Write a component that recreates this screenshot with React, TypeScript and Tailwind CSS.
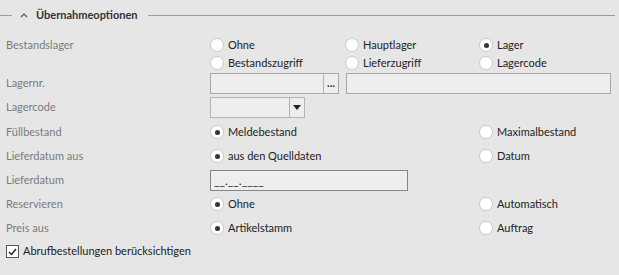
import React from 'react'

const font = {fontFamily: 'Lato, "Open Sans", sans-serif'}

function Radio({label, checked = false}: {label: string; checked?: boolean}) {
  return (
    <div className="flex items-center gap-[4px] whitespace-nowrap">
      <span className="flex h-[14px] w-[14px] items-center justify-center rounded-full border border-[#cacaca] bg-white">
        {checked && <span className="h-[5px] w-[5px] rounded-full bg-[#333]" />}
      </span>
      <span className="text-[11px] text-[#222]">{label}</span>
    </div>
  )
}

function Label({children}: {children: React.ReactNode}) {
  return <div className="w-[210px] shrink-0 pl-[6px] text-[11px] text-[#7b7b7b]">{children}</div>
}

// Zeile mit Label + Optionen in festen Spalten (210 / 479)
function OptRow({label, a, c, aChecked}: {label: string; a: string; c: string; aChecked?: boolean}) {
  return (
    <div className="flex h-[24px] items-center">
      <Label>{label}</Label>
      <div className="w-[269px]">
        <Radio label={a} checked={aChecked} />
      </div>
      <Radio label={c} />
    </div>
  )
}

export default function App() {
  return (
    <div className="h-[275px] w-[619px] overflow-hidden bg-[#e6e6e6]" style={font}>
      {/* Abschnittskopf */}
      <div className="flex h-[30px] items-center">
        <div className="h-px w-[12px] bg-[#9a9a9a]" />
        <svg width="24" height="10" viewBox="0 0 24 10" className="shrink-0">
          <polyline points="9,7 12,4 15,7" fill="none" stroke="#555" strokeWidth="1.2" />
        </svg>
        <span className="text-[11px] font-bold text-[#333]">Übernahmeoptionen</span>
        <div className="ml-[10px] mr-[4px] h-px flex-1 bg-[#9a9a9a]" />
      </div>

      <div className="mt-[6px] flex">
        <Label>
          <div className="flex h-[18px] items-center">Bestandslager</div>
        </Label>
        <div className="grid grid-cols-[135px_134px_130px] grid-rows-[18px_18px] items-center">
          <Radio label="Ohne" />
          <Radio label="Hauptlager" />
          <Radio label="Lager" checked />
          <Radio label="Bestandszugriff" />
          <Radio label="Lieferzugriff" />
          <Radio label="Lagercode" />
        </div>
      </div>

      <div className="mt-[1px] flex h-[21px] items-center">
        <Label>Lagernr.</Label>
        <div className="flex h-[21px] w-[129px] border border-[#a8a8a8] bg-[#eeeeee]">
          <div className="flex-1" />
          <div className="flex w-[15px] items-center justify-center border-l border-[#b4b4b4] pb-[2px] text-[11px] font-bold leading-none text-[#333]">
            ...
          </div>
        </div>
        <div className="ml-[7px] h-[21px] w-[265px] border border-[#a8a8a8] bg-[#eeeeee]" />
      </div>

      <div className="mt-[3px] flex h-[21px] items-center">
        <Label>Lagercode</Label>
        <div className="flex h-[21px] w-[95px] border border-[#b4b4b4] bg-[#eeeeee]">
          <div className="flex-1" />
          <div className="flex w-[15px] items-center justify-center border-l border-[#b4b4b4]">
            <svg width="8" height="5" viewBox="0 0 8 5">
              <polygon points="0,0 8,0 4,5" fill="#222" />
            </svg>
          </div>
        </div>
      </div>

      <div className="mt-[2px]">
        <OptRow label="Füllbestand" a="Meldebestand" c="Maximalbestand" aChecked />
        <OptRow label="Lieferdatum aus" a="aus den Quelldaten" c="Datum" aChecked />

        <div className="flex h-[24px] items-center">
          <Label>Lieferdatum</Label>
          <div className="flex h-[21px] w-[198px] items-end border border-[#858585] bg-[#eeeeee] pb-[1px] pl-[3px] text-[12px] leading-[16px] text-[#222]">
            __.__.____
          </div>
        </div>

        <OptRow label="Reservieren" a="Ohne" c="Automatisch" aChecked />
        <OptRow label="Preis aus" a="Artikelstamm" c="Auftrag" aChecked />

        <div className="flex h-[23px] items-center pl-[6px]">
          <span className="flex h-[13px] w-[13px] items-center justify-center border border-[#555] bg-white">
            <svg width="9" height="8" viewBox="0 0 9 8">
              <polyline points="1,4 3.5,6.5 8,1" fill="none" stroke="#222" strokeWidth="1.5" />
            </svg>
          </span>
          <span className="ml-[4px] text-[11px] text-[#222]">Abrufbestellungen berücksichtigen</span>
        </div>
      </div>
    </div>
  )
}
